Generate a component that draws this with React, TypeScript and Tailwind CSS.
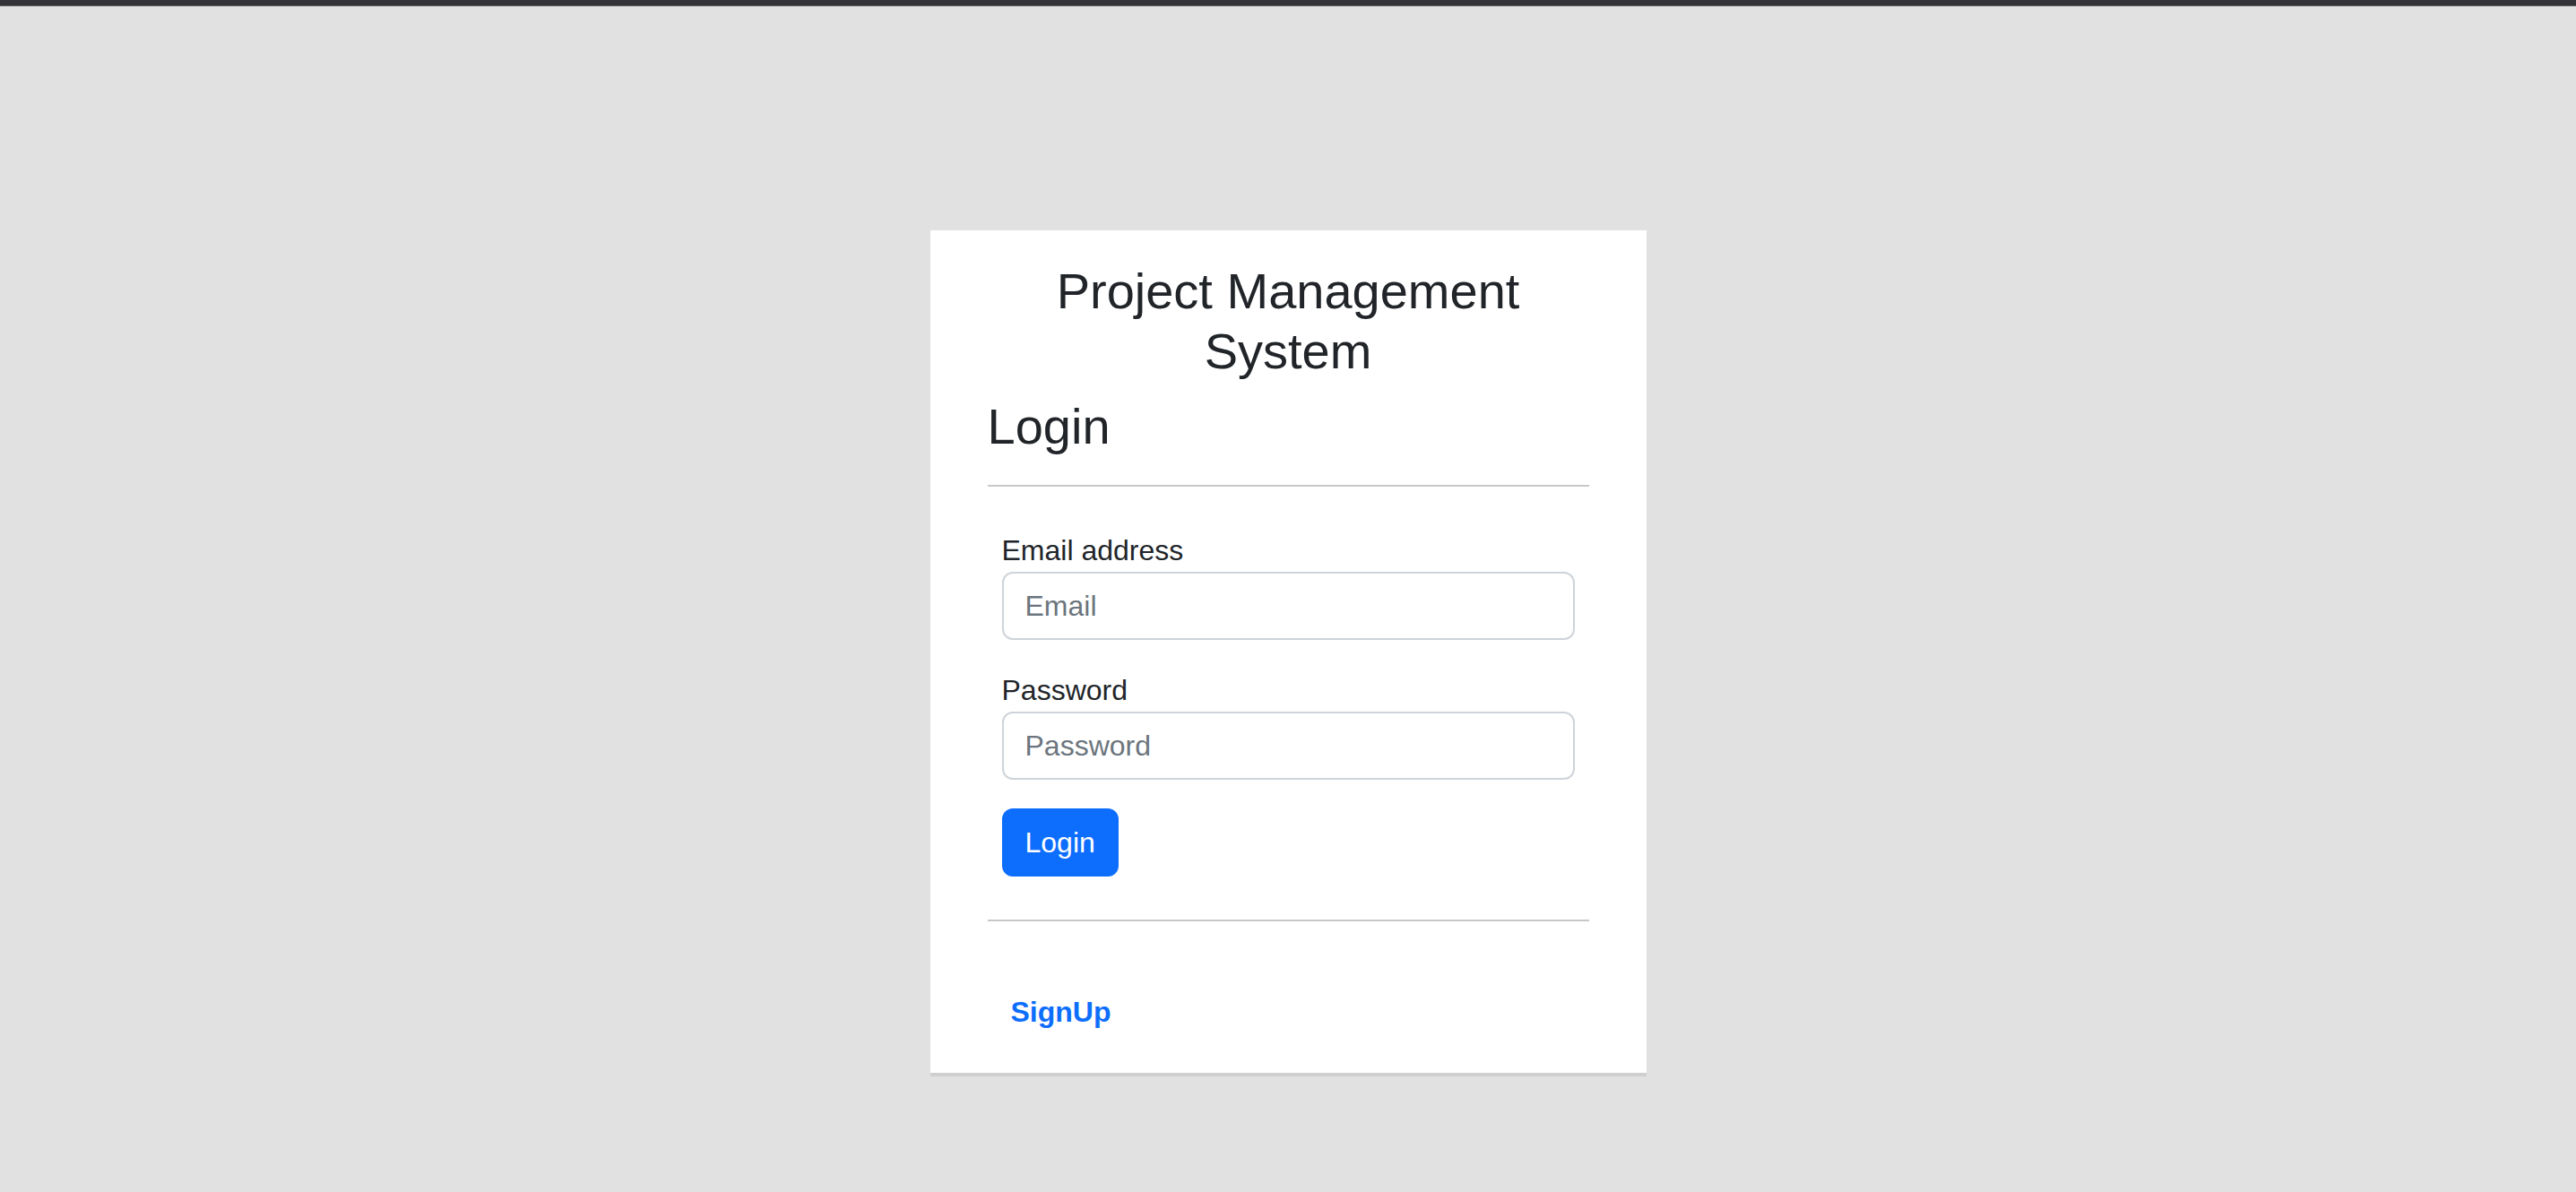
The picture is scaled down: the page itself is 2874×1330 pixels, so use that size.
export default function App() {
  return (
    <div className="min-h-screen bg-[#e1e1e1] font-['Liberation_Sans',Arial,sans-serif] text-[#212529]">
      {/* top bar */}
      <div className="h-[6px] bg-[#343438]" />
      <div className="h-[1px] bg-[#5c5c60]" />

      <div className="flex justify-center pt-[250px]">
        <div className="w-[799px] bg-white px-[64px] pt-[34px] pb-[44px] shadow-[0_4px_0_#cfcfcf]">
          <h3 className="text-center text-[56px] leading-[67px] font-normal">Project Management System</h3>
          <h3 className="mt-[17px] text-[56px] leading-[67px] font-normal">Login</h3>
          <hr className="mt-[32px] border-t-2 border-[#c8c8c8]" />

          <form className="mt-[31px] p-[16px]" onSubmit={(e) => e.preventDefault()}>
            <label className="block text-[32px] leading-[48px]">Email address</label>
            <input
              type="email"
              placeholder="Email"
              className="block h-[76px] w-full rounded-[12px] border-2 border-[#ced4da] px-[24px] text-[32px] text-[#212529] outline-none placeholder:text-[#6c757d]"
            />

            <label className="mt-[32px] block text-[32px] leading-[48px]">Password</label>
            <input
              type="password"
              placeholder="Password"
              className="block h-[76px] w-full rounded-[12px] border-2 border-[#ced4da] px-[24px] text-[32px] text-[#212529] outline-none placeholder:text-[#6c757d]"
            />

            <button
              type="submit"
              className="mt-[32px] h-[76px] rounded-[12px] border-2 border-[#0d6efd] bg-[#0d6efd] px-[24px] text-[32px] leading-[48px] text-white"
            >
              Login
            </button>
          </form>

          <hr className="mt-[32px] border-t-2 border-[#c8c8c8]" />

          <div className="pt-[77px] pl-[26px]">
            <a href="#" className="text-[32px] leading-[48px] font-bold text-[#0d6efd]">SignUp</a>
          </div>
        </div>
      </div>
    </div>
  );
}
